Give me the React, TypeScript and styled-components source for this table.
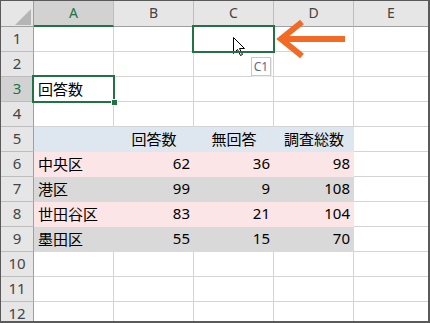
import React from 'react';
import styled, { createGlobalStyle, css } from 'styled-components';

const GREEN = '#217346';
const GRID = '#d4d4d4';
const HEAD_BG = '#e6e6e6';
const HEAD_LINE = '#bdbdbd';
const HEAD_EDGE = '#9f9f9f';
const ORANGE = '#f26a23';

const GlobalStyle = createGlobalStyle`
  html, body {
    margin: 0;
    padding: 0;
    background: #ffffff;
  }
  body {
    font-family: "Noto Sans", "Noto Sans CJK JP", sans-serif;
  }
  * { box-sizing: border-box; }
`;

const Frame = styled.div`
  position: relative;
  width: 430px;
  height: 323px;
  border: 1px solid #5a5a5a;
  border-right-width: 2px;
  border-bottom-width: 2px;
  overflow: hidden;
  background: #ffffff;
`;

/* Same track sizes for the cells and for the layer drawn over them */
const tracks = css`
  display: grid;
  grid-template-columns: 33px repeat(4, 80px) 1fr;
  grid-template-rows: 26px repeat(12, 25px);
  height: 100%;
`;

const Sheet = styled.div`
  ${tracks};
  color: #000000;
`;

const Overlay = styled.div`
  ${tracks};
  position: absolute;
  inset: 0;
  pointer-events: none;
`;

const Corner = styled.div`
  position: relative;
  background: ${HEAD_BG};
  border-right: 1px solid ${HEAD_EDGE};
  border-bottom: 1px solid ${HEAD_EDGE};

  &::after {
    content: '';
    position: absolute;
    left: 14px;
    top: 8px;
    width: 16px;
    height: 16px;
    background: #b5b5b5;
    clip-path: polygon(100% 0, 100% 100%, 0 100%);
  }
`;

const ColHead = styled.div<{ $active?: boolean; $last?: boolean }>`
  display: flex;
  align-items: center;
  justify-content: center;
  padding-bottom: 2px;
  font-size: 14px;
  color: #444444;
  background: ${HEAD_BG};
  border-right: ${(p) => (p.$last ? 'none' : `1px solid ${HEAD_LINE}`)};
  border-bottom: 1px solid ${HEAD_EDGE};
  ${(p) =>
    p.$active &&
    css`
      background: #d2d2d2;
      color: ${GREEN};
      border-bottom: 2px solid ${GREEN};
    `}
`;

const RowHead = styled.div<{ $active?: boolean }>`
  display: flex;
  align-items: center;
  justify-content: center;
  padding-bottom: 2px;
  font-size: 15px;
  color: #444444;
  background: ${HEAD_BG};
  border-right: 1px solid ${HEAD_EDGE};
  border-bottom: 1px solid ${HEAD_LINE};
  ${(p) =>
    p.$active &&
    css`
      background: #d2d2d2;
      color: ${GREEN};
    `}
`;

type Align = 'left' | 'right' | 'center';

const Cell = styled.div<{ $fill?: string; $align: Align; $last?: boolean }>`
  display: flex;
  align-items: center;
  justify-content: ${(p) =>
    p.$align === 'right' ? 'flex-end' : p.$align === 'center' ? 'center' : 'flex-start'};
  padding: 0 3px 2px 4px;
  font-size: 15px;
  white-space: nowrap;
  background: ${(p) => p.$fill ?? '#ffffff'};
  border-right: ${(p) => (p.$last ? 'none' : `1px solid ${p.$fill ?? GRID}`)};
  border-bottom: 1px solid ${(p) => p.$fill ?? GRID};
`;

/* Green outline around the selected cell, spreading over its gridlines */
const Outline = styled.div<{ $row: number; $col: number }>`
  grid-row: ${(p) => p.$row + 1};
  grid-column: ${(p) => p.$col + 1};
  position: relative;
  margin: -2px -1px -1px -2px;
  border: 2px solid ${GREEN};
`;

const FillHandle = styled.div`
  position: absolute;
  right: -5px;
  bottom: -5px;
  width: 7px;
  height: 7px;
  background: ${GREEN};
  border: 1px solid #ffffff;
`;

/* Mouse pointer with the cell-name tooltip under it */
const HoverMarker = styled.div<{ $row: number; $col: number }>`
  grid-row: ${(p) => p.$row + 1};
  grid-column: ${(p) => p.$col + 1};
  display: grid;
  grid-template-columns: 18px auto;
  grid-template-rows: 20px auto;
  align-self: start;
  justify-self: start;
  padding: 10px 0 0 39px;
`;

const Pointer = styled.svg`
  grid-row: 1 / span 2;
  grid-column: 1;
  overflow: visible;
`;

const Tip = styled.div`
  grid-row: 2;
  grid-column: 2;
  width: 20px;
  height: 19px;
  display: flex;
  align-items: center;
  justify-content: center;
  padding-bottom: 1px;
  font-size: 12px;
  color: #5b6b8c;
  background: #ffffff;
  border: 1px solid #c9c9c9;
  box-shadow: 1px 1px 0 #ececec;
`;

const Callout = styled.svg<{ $row: number; $col: number }>`
  grid-row: ${(p) => p.$row + 1};
  grid-column: ${(p) => p.$col + 1};
  align-self: center;
  margin: -2px 0 0 -3px;
  overflow: visible;
`;

type Row = { fill?: string; cells: { text: string; align: Align }[] };

const BLUE = '#dee7f0';
const PINK = '#fbe5e6';
const GREY = '#d9d9d9';

const L = (text: string) => ({ text, align: 'left' as Align });
const R = (n: number) => ({ text: String(n), align: 'right' as Align });
const C = (text: string) => ({ text, align: 'center' as Align });

const rows: Record<number, Row> = {
  3: { cells: [L('回答数')] },
  5: { fill: BLUE, cells: [L(''), C('回答数'), C('無回答'), C('調査総数')] },
  6: { fill: PINK, cells: [L('中央区'), R(62), R(36), R(98)] },
  7: { fill: GREY, cells: [L('港区'), R(99), R(9), R(108)] },
  8: { fill: PINK, cells: [L('世田谷区'), R(83), R(21), R(104)] },
  9: { fill: GREY, cells: [L('墨田区'), R(55), R(15), R(70)] },
};

const columns = ['A', 'B', 'C', 'D', 'E'];
const ACTIVE = { row: 3, col: 1 };
const HOVER = { row: 1, col: 3 };

export default function App() {
  return (
    <>
      <GlobalStyle />
      <Frame>
        <Sheet>
          <Corner />
          {columns.map((c, i) => (
            <ColHead key={c} $active={i + 1 === ACTIVE.col} $last={i === columns.length - 1}>
              {c}
            </ColHead>
          ))}
          {Array.from({ length: 12 }, (_, r) => {
            const n = r + 1;
            const row = rows[n];
            return (
              <React.Fragment key={n}>
                <RowHead $active={n === ACTIVE.row}>{n}</RowHead>
                {columns.map((c, i) => {
                  const cell = row?.cells[i];
                  return (
                    <Cell
                      key={c}
                      $fill={i < 4 ? row?.fill : undefined}
                      $align={cell?.align ?? 'left'}
                      $last={i === columns.length - 1}
                    >
                      {cell?.text}
                    </Cell>
                  );
                })}
              </React.Fragment>
            );
          })}
        </Sheet>

        <Overlay>
          <Outline $row={ACTIVE.row} $col={ACTIVE.col}>
            <FillHandle />
          </Outline>
          <Outline $row={HOVER.row} $col={HOVER.col} />

          <Callout $row={HOVER.row} $col={HOVER.col + 1} width="78" height="46" viewBox="0 0 78 46">
            <polyline
              points="31,6 10,23 31,40"
              fill="none"
              stroke={ORANGE}
              strokeWidth="6"
              strokeLinejoin="miter"
            />
            <line x1="12" y1="23" x2="74" y2="23" stroke={ORANGE} strokeWidth="6" />
          </Callout>

          <HoverMarker $row={HOVER.row} $col={HOVER.col}>
            <Pointer width="13" height="20" viewBox="0 0 13 20">
              <path
                d="M0.5 0.5 L0.5 16.5 L4.5 12.5 L7.5 18.5 L9.5 17.5 L6.5 11.5 L11.5 11.5 Z"
                fill="#ffffff"
                stroke="#000000"
                strokeWidth="1"
              />
            </Pointer>
            <Tip>C1</Tip>
          </HoverMarker>
        </Overlay>
      </Frame>
    </>
  );
}
